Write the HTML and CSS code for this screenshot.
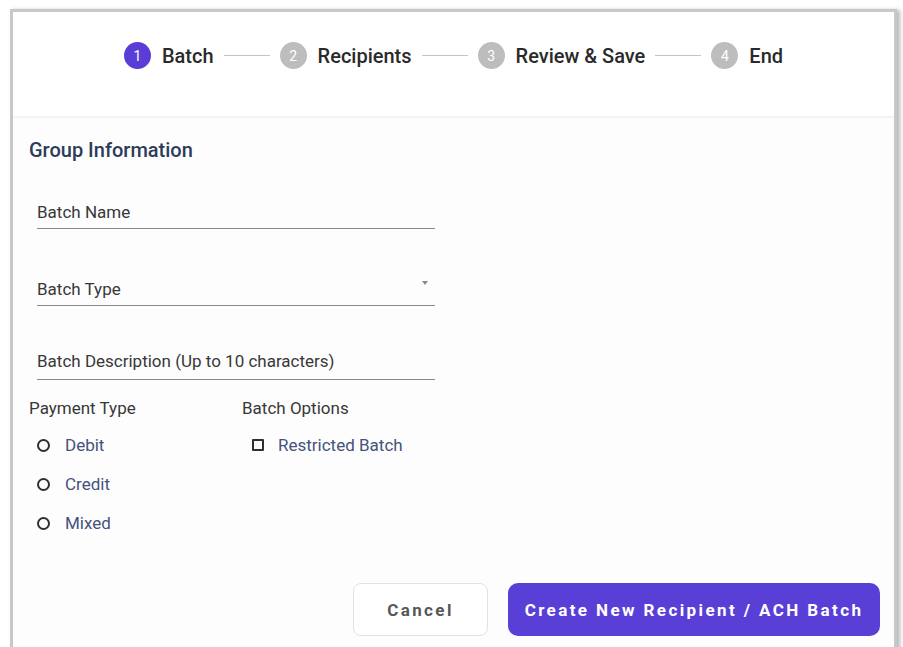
FILE: index.html
```html
<!DOCTYPE html>
<html lang="en">
<head>
<meta charset="utf-8">
<title>New ACH Batch</title>
<link rel="stylesheet" href="styles.css">
</head>
<body>
<div class="frame">
  <header class="wizard-head">
    <ol class="stepper">
      <li class="step active"><span class="step-icon">1</span><span class="step-label">Batch</span></li>
      <li class="connector"></li>
      <li class="step"><span class="step-icon">2</span><span class="step-label">Recipients</span></li>
      <li class="connector"></li>
      <li class="step"><span class="step-icon">3</span><span class="step-label">Review &amp; Save</span></li>
      <li class="connector"></li>
      <li class="step"><span class="step-icon">4</span><span class="step-label">End</span></li>
    </ol>
  </header>

  <main class="wizard-body">
    <h2 class="section-title">Group Information</h2>

    <div class="field field-name">
      <span class="field-label">Batch Name</span>
    </div>

    <div class="field field-select">
      <span class="field-label">Batch Type</span>
      <span class="select-arrow"></span>
    </div>

    <div class="field field-desc">
      <span class="field-label">Batch Description (Up to 10 characters)</span>
    </div>

    <div class="option-groups">
      <div class="option-group payment">
        <div class="group-label">Payment Type</div>
        <label class="choice"><span class="radio"></span><span class="choice-text">Debit</span></label>
        <label class="choice"><span class="radio"></span><span class="choice-text">Credit</span></label>
        <label class="choice"><span class="radio"></span><span class="choice-text">Mixed</span></label>
      </div>
      <div class="option-group batch-options">
        <div class="group-label">Batch Options</div>
        <label class="choice checkbox-choice"><span class="checkbox"></span><span class="choice-text">Restricted Batch</span></label>
      </div>
    </div>

    <div class="actions">
      <button class="btn btn-cancel" type="button">Cancel</button>
      <button class="btn btn-primary" type="button">Create New Recipient / ACH Batch</button>
    </div>
  </main>
</div>
</body>
</html>
```

FILE: styles.css
```css
* {
  box-sizing: border-box;
}

html, body {
  margin: 0;
  padding: 0;
  background: #ffffff;
  overflow: hidden;
}

body {
  font-family: Roboto, "Liberation Sans", Arial, sans-serif;
  color: #333333;
}

/* outer card */
.frame {
  margin: 9px 6px 0 10px;
  height: 660px;
  border: 3px solid #c8c8c8;
  border-bottom: none;
  background: #fdfdfd;
  box-shadow: 3px 1px 4px rgba(0, 0, 0, 0.28);
}

/* ---- stepper header ---- */
.wizard-head {
  height: 106px;
  padding-top: 30px;
  background: #ffffff;
  border-bottom: 2px solid #f3f3f3;
}

.stepper {
  list-style: none;
  margin: 0;
  padding: 0;
  display: flex;
  align-items: center;
  justify-content: center;
  height: 27px;
}

.step {
  display: flex;
  align-items: center;
}

.step-icon {
  width: 27px;
  height: 27px;
  border-radius: 50%;
  background: #bdbdbd;
  color: #ffffff;
  font-size: 14px;
  display: flex;
  align-items: center;
  justify-content: center;
}

.step.active .step-icon {
  background: #5a3dd6;
}

.step-label {
  margin-left: 11px;
  font-size: 20px;
  font-weight: 500;
  color: #2a2a2a;
}

.connector {
  width: 46px;
  height: 1px;
  margin: 0 10px;
  background: #c4c4c4;
}

/* ---- form body ---- */
.wizard-body {
  padding: 20px 14px 0 16px;
}

.section-title {
  margin: 0;
  font-size: 20px;
  line-height: 24px;
  font-weight: 500;
  color: #2d3b5a;
}

.field {
  position: relative;
  width: 398px;
  margin-left: 8px;
  padding-bottom: 6px;
  border-bottom: 1px solid #8a8a8a;
}

.field-label {
  display: block;
  font-size: 17px;
  line-height: 20px;
  color: #383838;
}

.field-name {
  margin-top: 40px;
}

.field-select {
  margin-top: 50px;
}

.field-desc {
  margin-top: 45px;
  padding-bottom: 8px;
}

.select-arrow {
  position: absolute;
  right: 7px;
  top: 2px;
  width: 0;
  height: 0;
  border-left: 3px solid transparent;
  border-right: 3px solid transparent;
  border-top: 4px solid #8a8a8a;
}

.option-groups {
  display: flex;
  margin-top: 18px;
}

.option-group.payment {
  width: 213px;
}

.group-label {
  font-size: 17px;
  line-height: 20px;
  color: #383838;
  margin-bottom: 17px;
}

.choice {
  display: flex;
  align-items: center;
  height: 20px;
  margin-bottom: 19px;
  margin-left: 8px;
}

.radio {
  width: 13px;
  height: 13px;
  border: 2px solid #2f2f2f;
  border-radius: 50%;
}

.checkbox {
  width: 12px;
  height: 12px;
  border: 2px solid #2f2f2f;
  border-radius: 1px;
}

.checkbox-choice {
  margin-left: 10px;
}

.choice-text {
  margin-left: 15px;
  font-size: 17px;
  line-height: 20px;
  color: #46527a;
}

.checkbox-choice .choice-text {
  margin-left: 14px;
}

/* ---- footer buttons ---- */
.actions {
  display: flex;
  justify-content: flex-end;
  gap: 20px;
  margin-top: 31px;
}

.btn {
  height: 53px;
  font-family: Roboto, "Liberation Sans", Arial, sans-serif;
  font-size: 17px;
  font-weight: 700;
  letter-spacing: 2.4px;
  cursor: pointer;
}

.btn-cancel {
  width: 135px;
  background: #ffffff;
  color: #575757;
  border: 1px solid #e2e2e2;
  border-radius: 8px;
}

.btn-primary {
  width: 372px;
  background: #5a3fd7;
  color: #ffffff;
  border: none;
  border-radius: 10px;
}
```
